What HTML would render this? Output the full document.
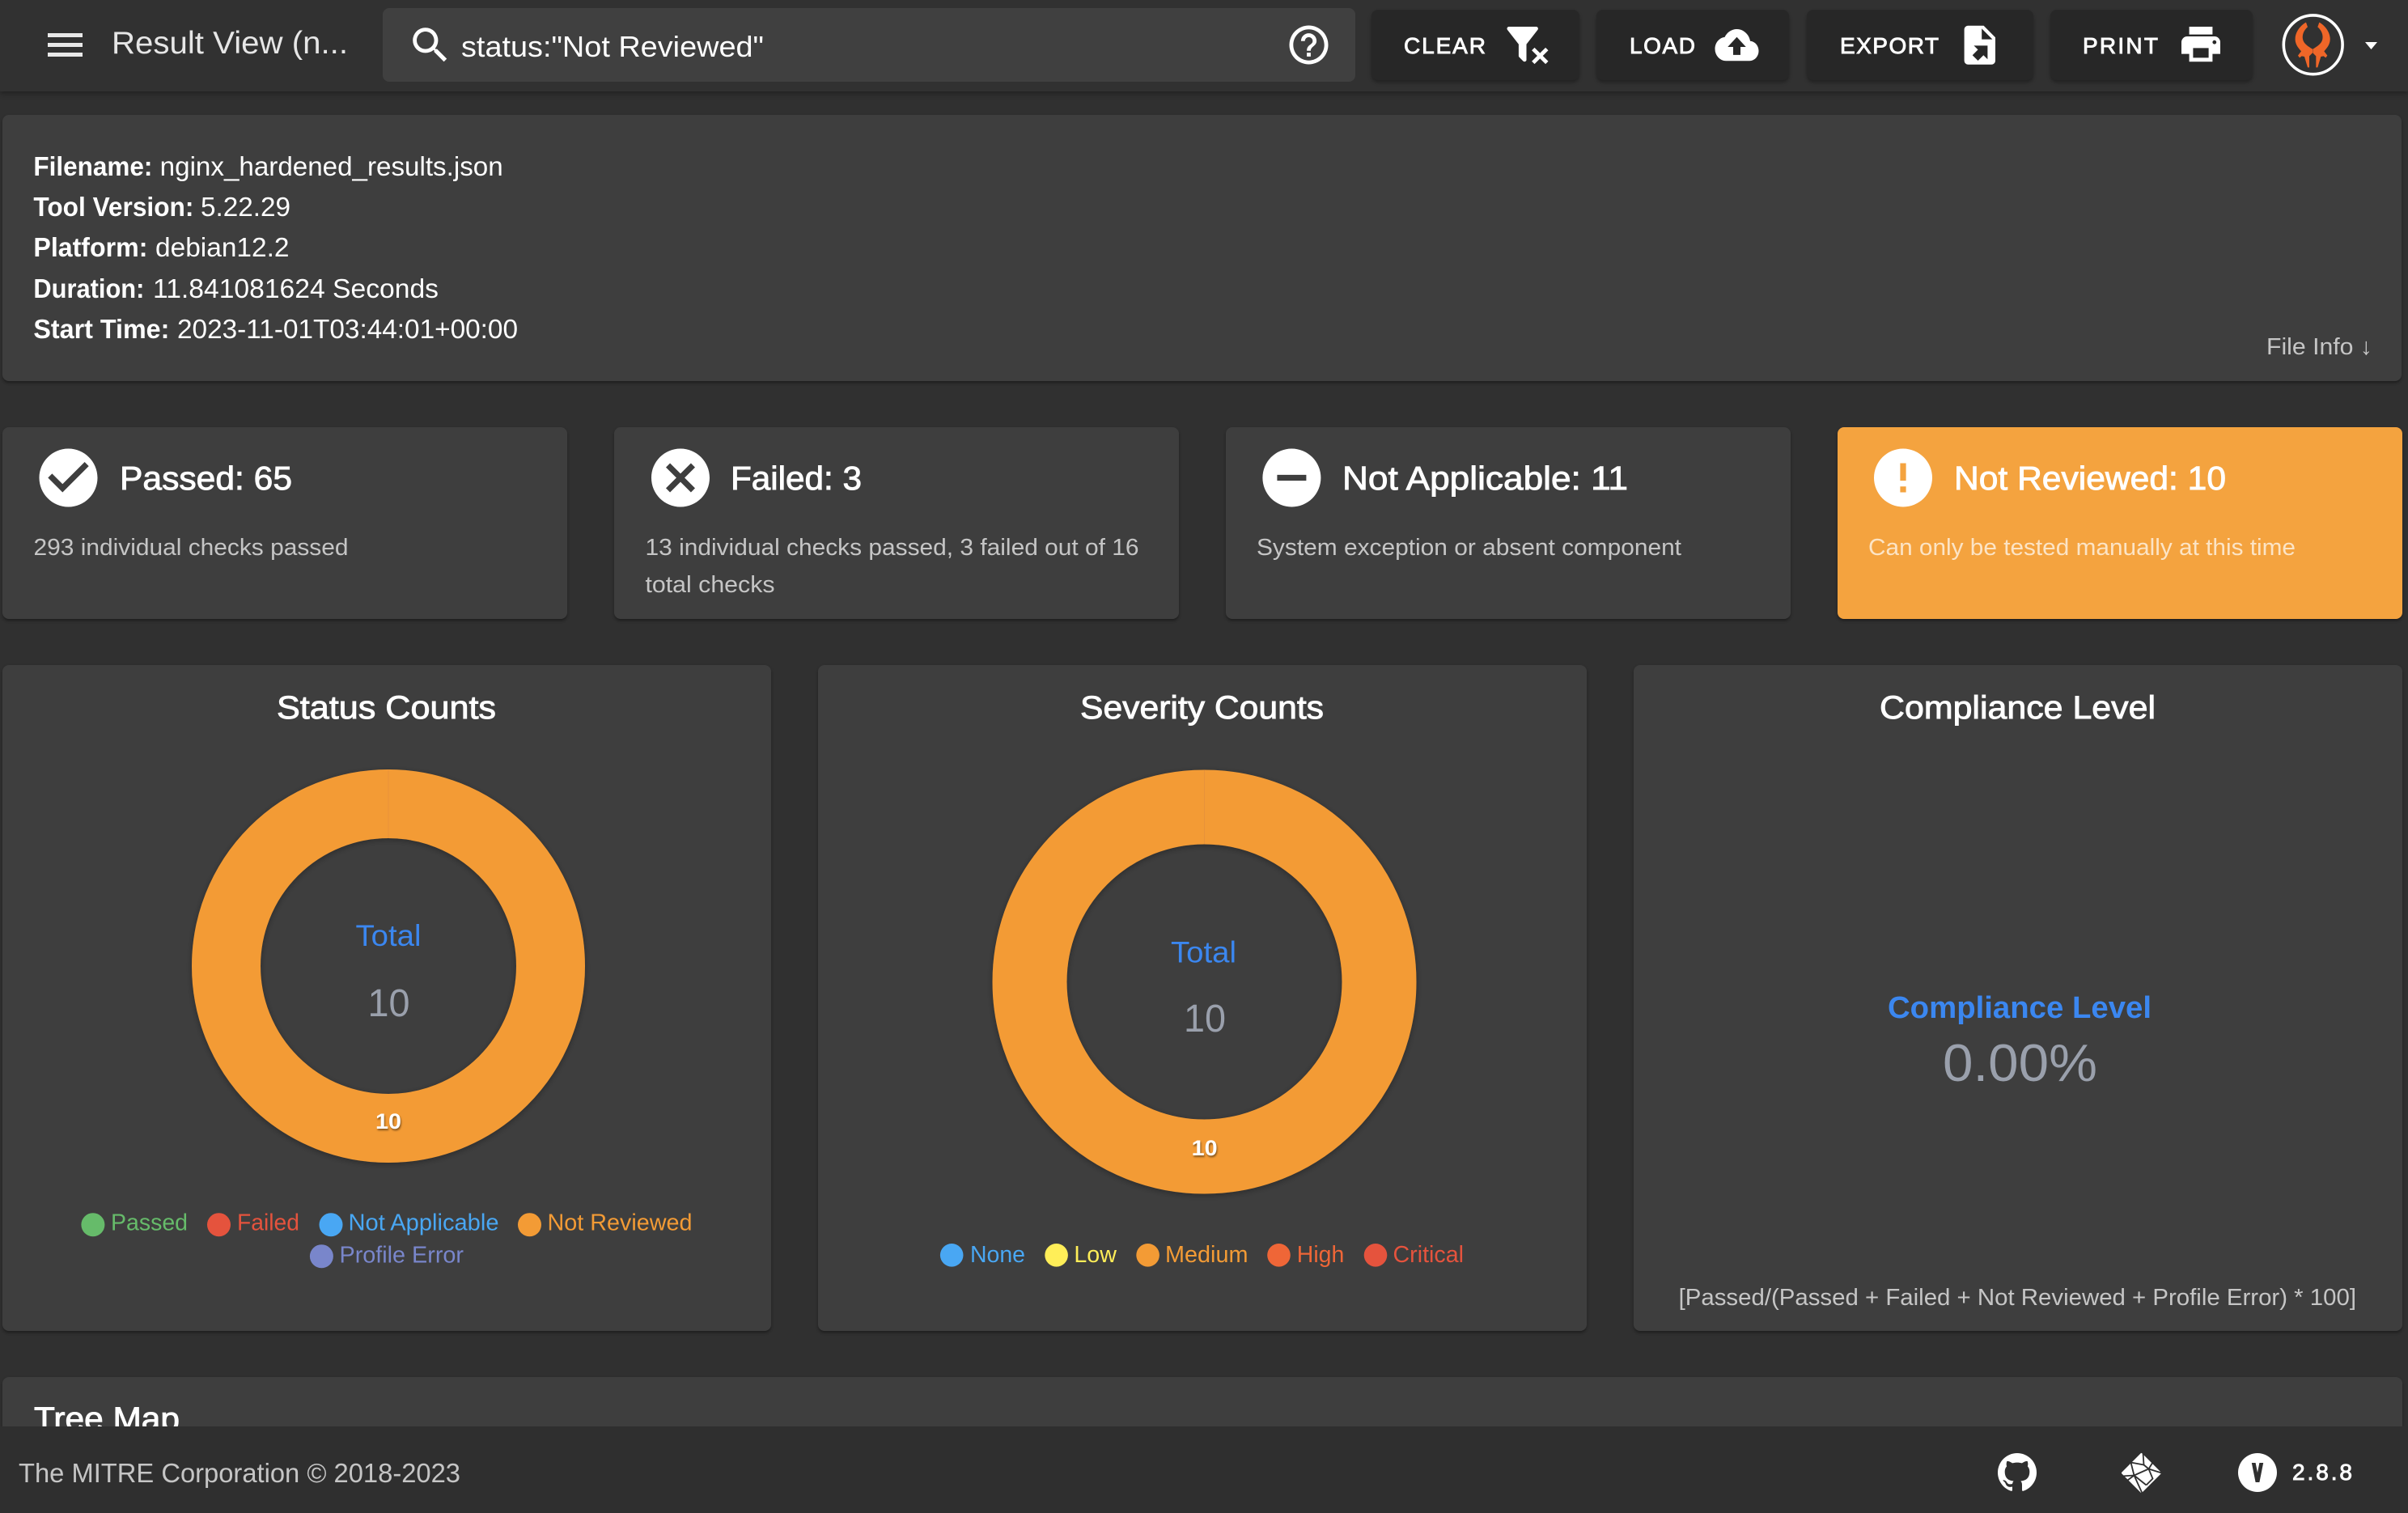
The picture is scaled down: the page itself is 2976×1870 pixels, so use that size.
<!DOCTYPE html>
<html lang="en"><head><meta charset="utf-8"><title>Result View</title>
<style>
html,body{margin:0;padding:0;width:2976px;height:1870px;overflow:hidden;background:#303030}
#root{position:relative;width:2976px;height:1870px;overflow:hidden;background:#303030}
.c{position:absolute;background:#3e3e3e;border-radius:8px;box-shadow:0 3px 3px -1px rgba(0,0,0,.28),0 2px 4px rgba(0,0,0,.18)}
.b{position:absolute;top:12px;height:87px;background:#272727;border-radius:8px;box-shadow:0 3px 4px rgba(0,0,0,.3)}
#hd{position:absolute;left:0;top:0;width:2976px;height:113px;background:#313131;box-shadow:0 3px 6px rgba(0,0,0,.3)}
#sr{position:absolute;left:473px;top:10px;width:1202px;height:91px;background:#404040;border-radius:8px}
svg{position:absolute;left:0;top:0;display:block}
text{font-family:"Liberation Sans",sans-serif;fill:#fff}
.m{stroke:#fff;stroke-width:.9px}
.d{fill:rgba(255,255,255,.7)}
.t{fill:#3b87f0}
.g{fill:#9aa0ac}
.w{fill:#fff;filter:drop-shadow(1px 2px 1px rgba(0,0,0,.45))}
</style></head><body><div id="root">
<div id="hd"></div><div id="sr"></div>
<div class="b" style="left:1695px;width:257px"></div>
<div class="b" style="left:1973px;width:238px"></div>
<div class="b" style="left:2233px;width:280px"></div>
<div class="b" style="left:2534px;width:250px"></div>
<div class="c" style="left:3px;top:142px;width:2965px;height:329px"></div>
<div class="c" style="left:3px;top:528px;width:698px;height:237px"></div>
<div class="c" style="left:759px;top:528px;width:698px;height:237px"></div>
<div class="c" style="left:1515px;top:528px;width:698px;height:237px"></div>
<div class="c" style="left:2271px;top:528px;width:698px;height:237px;background:#f4a33f"></div>
<div class="c" style="left:3px;top:822px;width:950px;height:823px"></div>
<div class="c" style="left:1011px;top:822px;width:950px;height:823px"></div>
<div class="c" style="left:2019px;top:822px;width:950px;height:823px"></div>
<div class="c" style="left:3px;top:1702px;width:2966px;height:120px"></div>
<svg width="2976" height="1870" viewBox="0 0 2976 1870" xmlns="http://www.w3.org/2000/svg">
<defs><filter id="ds" x="-40%" y="-40%" width="180%" height="180%"><feDropShadow dx="0" dy="2" stdDeviation="4" flood-color="#000" flood-opacity=".3"/></filter></defs>
<!-- header -->
<g fill="#e8e8e8"><rect x="59" y="41" width="43" height="5"/><rect x="59" y="53" width="43" height="5"/><rect x="59" y="65" width="43" height="5"/></g>
<text x="138" y="66" font-size="39" style="fill:#e6e6e6" textLength="292" lengthAdjust="spacingAndGlyphs">Result View (n...</text>
<path transform="translate(503 27) scale(2.4)" fill="#fff" d="M9.5,3A6.5,6.5 0 0,1 16,9.5C16,11.11 15.41,12.59 14.44,13.73L14.71,14H15.5L20.5,19L19,20.5L14,15.5V14.71L13.73,14.44C12.59,15.41 11.11,16 9.5,16A6.5,6.5 0 0,1 3,9.5A6.5,6.5 0 0,1 9.5,3M9.5,5C7,5 5,7 5,9.5C5,12 7,14 9.5,14C12,14 14,12 14,9.5C14,7 12,5 9.5,5Z"/>
<text x="570" y="70" font-size="36" textLength="374" lengthAdjust="spacingAndGlyphs">status:"Not Reviewed"</text>
<path transform="translate(1588.7 26.7) scale(2.4)" fill="#fff" d="M11,18H13V16H11V18M12,2A10,10 0 0,0 2,12A10,10 0 0,0 12,22A10,10 0 0,0 22,12A10,10 0 0,0 12,2M12,20C7.59,20 4,16.41 4,12C4,7.59 7.59,4 12,4C16.41,4 20,7.59 20,12C20,16.41 16.41,20 12,20M12,6A4,4 0 0,0 8,10H10A2,2 0 0,1 12,8A2,2 0 0,1 14,10C14,12 11,11.75 11,15H13C13,12.75 16,12.5 16,10A4,4 0 0,0 12,6Z"/>
<text class="m" x="1735" y="66" font-size="28" textLength="101" lengthAdjust="spacing">CLEAR</text>
<text class="m" x="2014" y="66" font-size="28" textLength="81" lengthAdjust="spacing">LOAD</text>
<text class="m" x="2274" y="66" font-size="28" textLength="122" lengthAdjust="spacing">EXPORT</text>
<text class="m" x="2574" y="66" font-size="28" textLength="93" lengthAdjust="spacing">PRINT</text>
<path transform="translate(1857.7 25.8) scale(2.4)" fill="#fff" d="M14.76,20.83L17.6,18L14.76,15.17L16.17,13.76L19,16.57L21.83,13.76L23.24,15.17L20.43,18L23.24,20.83L21.83,22.24L19,19.4L16.17,22.24L14.76,20.83M12,12V19.88C12.04,20.18 11.94,20.5 11.71,20.71C11.32,21.1 10.69,21.1 10.3,20.71L8.29,18.7C8.06,18.47 7.96,18.16 8,17.88V12H7.97L2.21,4.62C1.87,4.19 1.95,3.56 2.38,3.22C2.57,3.08 2.78,3 3,3V3H17V3C17.22,3 17.43,3.08 17.62,3.22C18.05,3.56 18.13,4.19 17.79,4.62L12.03,12H12Z"/>
<path transform="translate(2119.5 26.2) scale(2.25 2.45)" fill="#fff" d="M14,13V17H10V13H7L12,8L17,13M19.35,10.03C18.67,6.59 15.64,4 12,4C9.11,4 6.6,5.64 5.35,8.03C2.34,8.36 0,10.9 0,14A6,6 0 0,0 6,20H19A5,5 0 0,0 24,15C24,12.36 21.95,10.22 19.35,10.03Z"/>
<path transform="translate(2418 27) scale(2.4)" fill="#fff" fill-rule="evenodd" d="M6,2C4.89,2 4,2.9 4,4V20A2,2 0 0,0 6,22H18A2,2 0 0,0 20,20V8L14,2M13,3.5L18.5,9H13M8.93,12.22H16V19.29L13.88,17.17L11.05,20L8.22,17.17L11.05,14.34L8.93,12.22Z"/>
<path transform="translate(2691.2 25.8) scale(2.4)" fill="#fff" d="M18,3H6V7H18M19,12A1,1 0 0,1 18,11A1,1 0 0,1 19,10A1,1 0 0,1 20,11A1,1 0 0,1 19,12M16,19H8V14H16M19,8H5A3,3 0 0,0 2,11V17H6V21H18V17H22V11A3,3 0 0,0 19,8Z"/>
<circle cx="2858.7" cy="55.3" r="36.4" fill="none" stroke="#fff" stroke-width="3.6"/>
<g transform="translate(2780 0) scale(.3333)" fill="#ef6628">
<path d="M210,83L216,100C202,112 195,128 198,145C201,162 218,172 234,182L234,196L222,208L222,250L216,250L204,210L194,208L186,214L180,206L192,190C178,175 168,160 170,140C172,118 188,95 210,83Z"/>
<path transform="translate(469 0) scale(-1 1)" d="M210,83L216,100C202,112 195,128 198,145C201,162 218,172 234,182L234,196L222,208L222,250L216,250L204,210L194,208L186,214L180,206L192,190C178,175 168,160 170,140C172,118 188,95 210,83Z"/>
</g>
<path d="M2923,52H2938L2930.5,61Z" fill="#fff"/>
<!-- file info -->
<g font-size="33">
<text font-weight="700" x="41.4" y="217" textLength="147" lengthAdjust="spacingAndGlyphs">Filename:</text><text x="197.7" y="217" textLength="424" lengthAdjust="spacingAndGlyphs">nginx_hardened_results.json</text>
<text font-weight="700" x="41.4" y="267" textLength="198" lengthAdjust="spacingAndGlyphs">Tool Version:</text><text x="248" y="267" textLength="111" lengthAdjust="spacingAndGlyphs">5.22.29</text>
<text font-weight="700" x="41.4" y="317" textLength="141" lengthAdjust="spacingAndGlyphs">Platform:</text><text x="192" y="317" textLength="165.5" lengthAdjust="spacingAndGlyphs">debian12.2</text>
<text font-weight="700" x="41.4" y="368" textLength="137" lengthAdjust="spacingAndGlyphs">Duration:</text><text x="189" y="368" textLength="353" lengthAdjust="spacingAndGlyphs">11.841081624 Seconds</text>
<text font-weight="700" x="41.4" y="418" textLength="168" lengthAdjust="spacingAndGlyphs">Start Time:</text><text x="219" y="418" textLength="421" lengthAdjust="spacingAndGlyphs">2023-11-01T03:44:01+00:00</text>
</g>
<text class="d" x="2801" y="438" font-size="29" textLength="131" lengthAdjust="spacingAndGlyphs">File Info ↓</text>
<!-- status cards -->
<g fill="#fff" fill-rule="evenodd">
<path transform="translate(41.3 547.3) scale(3.6)" d="M12 2C6.5 2 2 6.5 2 12S6.5 22 12 22 22 17.5 22 12 17.5 2 12 2M10 17L5 12L6.41 10.59L10 14.17L17.59 6.58L19 8L10 17Z"/>
<path transform="translate(797.8 547.3) scale(3.6)" d="M12,2C17.53,2 22,6.47 22,12C22,17.53 17.53,22 12,22C6.47,22 2,17.53 2,12C2,6.47 6.47,2 12,2M15.59,7L12,10.59L8.41,7L7,8.41L10.59,12L7,15.59L8.41,17L12,13.41L15.59,17L17,15.59L13.41,12L17,8.41L15.59,7Z"/>
<path transform="translate(1553.2 547.3) scale(3.6)" d="M17,13H7V11H17M12,2A10,10 0 0,0 2,12A10,10 0 0,0 12,22A10,10 0 0,0 22,12A10,10 0 0,0 12,2Z"/>
<path transform="translate(2308.8 547.3) scale(3.6)" d="M13,13H11V7H13M13,17H11V15H13M12,2A10,10 0 0,0 2,12A10,10 0 0,0 12,22A10,10 0 0,0 22,12A10,10 0 0,0 12,2Z"/>
</g>
<g font-size="41">
<text class="m" x="148" y="605" textLength="213" lengthAdjust="spacingAndGlyphs">Passed: 65</text>
<text class="m" x="903" y="605" textLength="162" lengthAdjust="spacingAndGlyphs">Failed: 3</text>
<text class="m" x="1659" y="605" textLength="353" lengthAdjust="spacingAndGlyphs">Not Applicable: 11</text>
<text class="m" x="2415" y="605" textLength="336" lengthAdjust="spacingAndGlyphs">Not Reviewed: 10</text>
</g>
<g font-size="29">
<text class="d" x="41.5" y="686" textLength="389" lengthAdjust="spacingAndGlyphs">293 individual checks passed</text>
<text class="d" x="797.5" y="686" textLength="610" lengthAdjust="spacingAndGlyphs">13 individual checks passed, 3 failed out of 16</text>
<text class="d" x="797.5" y="732" textLength="160" lengthAdjust="spacingAndGlyphs">total checks</text>
<text class="d" x="1553" y="686" textLength="525" lengthAdjust="spacingAndGlyphs">System exception or absent component</text>
<text class="d" x="2309" y="686" textLength="528" lengthAdjust="spacingAndGlyphs">Can only be tested manually at this time</text>
</g>
<!-- chart titles -->
<g font-size="40">
<text class="m" x="342" y="888" textLength="271" lengthAdjust="spacingAndGlyphs">Status Counts</text>
<text class="m" x="1335" y="888" textLength="301" lengthAdjust="spacingAndGlyphs">Severity Counts</text>
<text class="m" x="2323" y="888" textLength="341" lengthAdjust="spacingAndGlyphs">Compliance Level</text>
</g>
<!-- donut 1 -->
<circle cx="480" cy="1194" r="200.5" fill="none" stroke="#f39b35" stroke-width="85" filter="url(#ds)"/>
<line x1="480" y1="951" x2="480" y2="1036" stroke="#e8923a" stroke-width="1"/>
<text class="t" x="439.5" y="1169" font-size="37" textLength="81" lengthAdjust="spacingAndGlyphs">Total</text>
<text class="g" x="454.5" y="1256" font-size="48" textLength="52" lengthAdjust="spacingAndGlyphs">10</text>
<text class="w" x="464" y="1395" font-size="27" font-weight="700" textLength="32" lengthAdjust="spacingAndGlyphs">10</text>
<!-- donut 2 -->
<circle cx="1488.5" cy="1213.5" r="216" fill="none" stroke="#f39b35" stroke-width="92" filter="url(#ds)"/>
<line x1="1488.5" y1="952" x2="1488.5" y2="1043" stroke="#e8923a" stroke-width="1"/>
<text class="t" x="1447" y="1189.5" font-size="37" textLength="81" lengthAdjust="spacingAndGlyphs">Total</text>
<text class="g" x="1463" y="1275" font-size="48" textLength="52" lengthAdjust="spacingAndGlyphs">10</text>
<text class="w" x="1472.6" y="1428" font-size="27" font-weight="700" textLength="32" lengthAdjust="spacingAndGlyphs">10</text>
<!-- legend 1 -->
<g font-size="29">
<circle cx="114.9" cy="1513.7" r="14.5" fill="#66bb6a"/><text style="fill:#66bb6a" x="137" y="1520.7" textLength="95" lengthAdjust="spacingAndGlyphs">Passed</text>
<circle cx="270.5" cy="1513.7" r="14.5" fill="#e5533d"/><text style="fill:#e5533d" x="293" y="1520.7" textLength="77" lengthAdjust="spacingAndGlyphs">Failed</text>
<circle cx="409" cy="1513.7" r="14.5" fill="#49a7f3"/><text style="fill:#49a7f3" x="430.5" y="1520.7" textLength="186" lengthAdjust="spacingAndGlyphs">Not Applicable</text>
<circle cx="654.5" cy="1513.7" r="14.5" fill="#f39b35"/><text style="fill:#f39b35" x="676.5" y="1520.7" textLength="179" lengthAdjust="spacingAndGlyphs">Not Reviewed</text>
<circle cx="397.4" cy="1552.7" r="14.5" fill="#7986cb"/><text style="fill:#7986cb" x="419.5" y="1560.7" textLength="153.5" lengthAdjust="spacingAndGlyphs">Profile Error</text>
<!-- legend 2 -->
<circle cx="1176.2" cy="1551.3" r="14.3" fill="#49a7f3"/><text style="fill:#49a7f3" x="1199" y="1560" textLength="68" lengthAdjust="spacingAndGlyphs">None</text>
<circle cx="1305.6" cy="1551.3" r="14.3" fill="#ffee58"/><text style="fill:#ffee58" x="1327.4" y="1560" textLength="52.5" lengthAdjust="spacingAndGlyphs">Low</text>
<circle cx="1418.6" cy="1551.3" r="14.3" fill="#f39b35"/><text style="fill:#f39b35" x="1440" y="1560" textLength="102.5" lengthAdjust="spacingAndGlyphs">Medium</text>
<circle cx="1580.5" cy="1551.3" r="14.3" fill="#ef6637"/><text style="fill:#ef6637" x="1602.8" y="1560" textLength="58.5" lengthAdjust="spacingAndGlyphs">High</text>
<circle cx="1700" cy="1551.3" r="14.3" fill="#e5533d"/><text style="fill:#e5533d" x="1721.5" y="1560" textLength="87.5" lengthAdjust="spacingAndGlyphs">Critical</text>
</g>
<!-- compliance -->
<text class="t" x="2333" y="1258" font-size="38" font-weight="700" textLength="326" lengthAdjust="spacingAndGlyphs">Compliance Level</text>
<text class="g" x="2401" y="1336" font-size="65" textLength="191" lengthAdjust="spacingAndGlyphs">0.00%</text>
<text class="d" x="2074.6" y="1613" font-size="29" textLength="837.4" lengthAdjust="spacingAndGlyphs">[Passed/(Passed + Failed + Not Reviewed + Profile Error) * 100]</text>
<!-- tree + footer -->
<text class="m" x="42" y="1767" font-size="40" textLength="180" lengthAdjust="spacingAndGlyphs">Tree Map</text>
<rect x="0" y="1763" width="2976" height="107" fill="#2f2f2f"/>
<text x="23" y="1832" font-size="33" style="fill:rgba(255,255,255,.72)" textLength="546" lengthAdjust="spacingAndGlyphs">The MITRE Corporation © 2018-2023</text>
<path transform="translate(2464.2 1791.2) scale(2.4)" fill="#fff" d="M12,2A10,10 0 0,0 2,12C2,16.42 4.87,20.17 8.84,21.5C9.34,21.58 9.5,21.27 9.5,21C9.5,20.77 9.5,20.14 9.5,19.31C6.73,19.91 6.14,17.97 6.14,17.97C5.68,16.81 5.03,16.5 5.03,16.5C4.12,15.88 5.1,15.9 5.1,15.9C6.1,15.97 6.63,16.93 6.63,16.93C7.5,18.45 8.97,18 9.54,17.76C9.63,17.11 9.89,16.67 10.17,16.42C7.95,16.17 5.62,15.31 5.62,11.5C5.62,10.39 6,9.5 6.65,8.79C6.55,8.54 6.2,7.5 6.75,6.15C6.75,6.15 7.59,5.88 9.5,7.17C10.29,6.95 11.15,6.84 12,6.84C12.85,6.84 13.71,6.95 14.5,7.17C16.41,5.88 17.25,6.15 17.25,6.15C17.8,7.5 17.45,8.54 17.35,8.79C18,9.5 18.38,10.39 18.38,11.5C18.38,15.32 16.04,16.16 13.81,16.41C14.17,16.72 14.5,17.33 14.5,18.26C14.5,19.6 14.5,20.68 14.5,21C14.5,21.27 14.66,21.59 15.17,21.5C19.14,20.16 22,16.42 22,12A10,10 0 0,0 12,2Z"/>
<g transform="translate(2646.5 1820.5)">
<path fill="#fff" stroke="#fff" stroke-width="3" stroke-linejoin="round" d="M0,-23L23,0L0,23L-23,0Z"/>
<g stroke="#2f2f2f" stroke-width="1.8" fill="none">
<path d="M-9,3L-13,-13L3,-10L2,-25"/><path d="M-9,3L9,-5L14,-13"/><path d="M9,-5L25,0"/><path d="M9,-5L14,7L6,15"/>
<path d="M-9,3L1,25"/><path d="M-9,3L-25,4"/><path d="M-9,3L-17,9"/><path d="M-9,3L6,15"/><path d="M3,-10L9,-5"/>
</g></g>
<path transform="translate(2761.2 1791.2) scale(2.4)" fill="#fff" fill-rule="evenodd" d="M9,7L11,17H13L15,7H13L12,12L11,7H9M12,2A10,10 0 0,1 22,12A10,10 0 0,1 12,22A10,10 0 0,1 2,12A10,10 0 0,1 12,2Z"/>
<text class="m" x="2833" y="1829" font-size="28" textLength="74" lengthAdjust="spacing">2.8.8</text>
</svg>
</div></body></html>
